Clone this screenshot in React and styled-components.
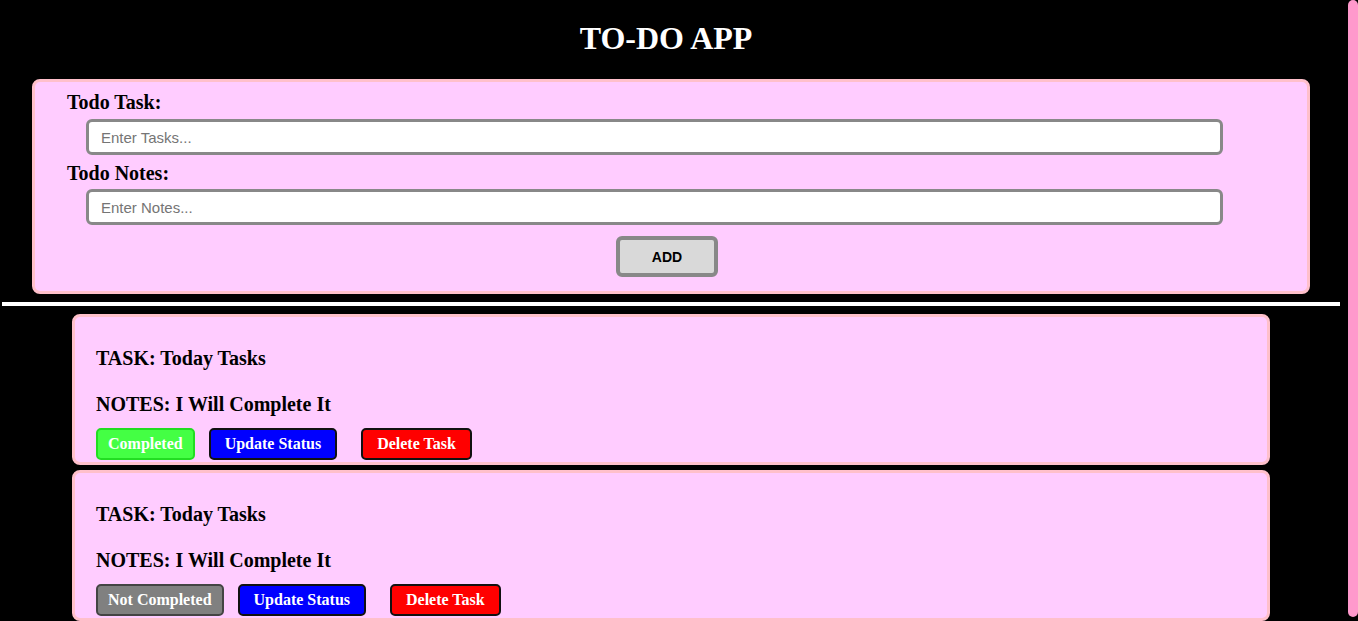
import styled, { createGlobalStyle } from "styled-components";

const GlobalStyle = createGlobalStyle`
  html, body {
    margin: 0;
    padding: 0;
    background: #000;
    overflow: hidden;
  }
  * { box-sizing: border-box; }
`;

const todos = [
  { task: "Today Tasks", notes: "I Will Complete It", done: true },
  { task: "Today Tasks", notes: "I Will Complete It", done: false },
];

const App = () => {
  return (
    <Page>
      <GlobalStyle />
      <Main>
        <Title>TO-DO APP</Title>
        <Form onSubmit={(e) => e.preventDefault()}>
          <Label>Todo Task:</Label>
          <Input placeholder="Enter Tasks..." />
          <Label $top={7}>Todo Notes:</Label>
          <Input $top={5} placeholder="Enter Notes..." />
          <ButtonRow>
            <AddButton type="submit">ADD</AddButton>
          </ButtonRow>
        </Form>
        <Divider />
        <List>
          {todos.map((todo, i) => (
            <Card key={i}>
              <Line>TASK: {todo.task}</Line>
              <Line $top={24}>NOTES: {todo.notes}</Line>
              <Actions>
                <StatusButton $done={todo.done}>
                  {todo.done ? "Completed" : "Not Completed"}
                </StatusButton>
                <ActionButton $bg="#0000ff">Update Status</ActionButton>
                <ActionButton $bg="#ff0000" $gap={24}>
                  Delete Task
                </ActionButton>
              </Actions>
            </Card>
          ))}
        </List>
      </Main>
      <Rail>
        <Thumb />
      </Rail>
    </Page>
  );
};
export default App;

const Page = styled.div`
  display: flex;
  width: 1358px;
  height: 621px;
  overflow: hidden;
  background: #000;
  font-family: "Liberation Serif", "Times New Roman", serif;
`;

const Main = styled.main`
  width: 1342px;
  flex-shrink: 0;
`;

const Title = styled.h1`
  margin: 20px 0 22px;
  padding-right: 10px;
  text-align: center;
  color: #fff;
  font-size: 32px;
  font-weight: bold;
`;

const Form = styled.form`
  display: flex;
  flex-direction: column;
  align-items: flex-start;
  margin-left: 32px;
  width: 1278px;
  padding: 9px 0 14px;
  background: #ffccff;
  border: 3px solid #ffc0cb;
  border-radius: 8px;
`;

const Label = styled.label`
  margin: ${(p) => p.$top || 0}px 0 0 32px;
  font-size: 20px;
  line-height: 22px;
  font-weight: bold;
  color: #000;
`;

const Input = styled.input`
  margin: ${(p) => p.$top || 6}px 0 0 51px;
  width: 1137px;
  height: 36px;
  padding: 0 12px;
  background: #fff;
  border: 3px solid #888;
  border-radius: 6px;
  font-family: "Liberation Sans", Arial, sans-serif;
  font-size: 15px;
  outline: none;

  &::placeholder {
    color: #757575;
  }
`;

const ButtonRow = styled.div`
  display: flex;
  justify-content: center;
  align-self: stretch;
  margin-top: 11px;
  padding-right: 8px;
`;

const AddButton = styled.button`
  width: 102px;
  height: 41px;
  background: #d9d9d9;
  border: 4px solid #888;
  border-radius: 6px;
  font-family: "Liberation Sans", Arial, sans-serif;
  font-size: 14px;
  font-weight: bold;
  color: #000;
`;

const Divider = styled.hr`
  margin: 8px 0 0 2px;
  width: 1338px;
  height: 4px;
  border: none;
  background: #fff;
`;

const List = styled.div`
  display: flex;
  flex-direction: column;
  gap: 5px;
  margin: 8px 0 0 72px;
  width: 1198px;
`;

const Card = styled.div`
  padding: 30px 22px 2px;
  background: #ffccff;
  border: 3px solid #ffc0cb;
  border-radius: 8px;
`;

const Line = styled.h3`
  margin: ${(p) => p.$top || 0}px 0 0 -1px;
  font-size: 20px;
  line-height: 22px;
  font-weight: bold;
  color: #000;
`;

const Actions = styled.div`
  display: flex;
  margin-top: 13px;
  margin-left: -1px;
`;

const BaseButton = styled.button`
  height: 32px;
  border-radius: 5px;
  font-family: "Liberation Serif", "Times New Roman", serif;
  font-size: 16px;
  font-weight: bold;
  color: #fff;
`;

const StatusButton = styled(BaseButton)`
  padding: 0 10px;
  background: ${(p) => (p.$done ? "#44ff44" : "#808080")};
  border: 2px solid ${(p) => (p.$done ? "#22dd22" : "#444")};
`;

const ActionButton = styled(BaseButton)`
  margin-left: ${(p) => p.$gap || 14}px;
  padding: 0 14px;
  background: ${(p) => p.$bg};
  border: 2px solid #111;
`;

const Rail = styled.div`
  margin-left: auto;
  width: 10px;
  height: 621px;
  padding-bottom: 4px;
`;

const Thumb = styled.div`
  height: 100%;
  background: #ff99cc;
  border-radius: 5px;
`;
